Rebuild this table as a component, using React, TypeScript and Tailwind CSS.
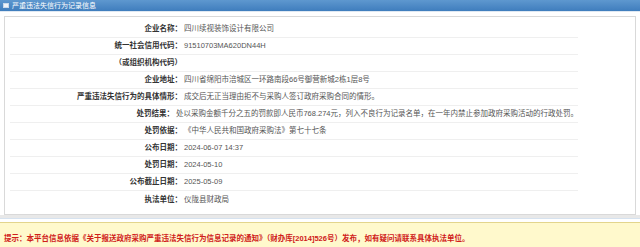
const rows: [string, string][] = [
  ["企业名称：", "四川续视装饰设计有限公司"],
  ["统一社会信用代码：", "91510703MA620DN44H"],
  ["（或组织机构代码）", ""],
  ["企业地址：", "四川省绵阳市涪城区一环路南段66号御营新城2栋1层8号"],
  ["严重违法失信行为的具体情形：", "成交后无正当理由拒不与采购人签订政府采购合同的情形。"],
  ["处罚结果：", "处以采购金额千分之五的罚款即人民币768.274元，列入不良行为记录名单，在一年内禁止参加政府采购活动的行政处罚。"],
  ["处罚依据：", "《中华人民共和国政府采购法》第七十七条"],
  ["公布日期：", "2024-06-07 14:37"],
  ["处罚日期：", "2024-05-10"],
  ["公布截止日期：", "2025-05-09"],
  ["执法单位：", "仪陇县财政局"],
];

export default function App() {
  return (
    <div
      className="w-[640px] h-[247px] overflow-hidden bg-white text-[7.5px] leading-none"
      style={{ fontFamily: '"Liberation Sans", "Noto Sans CJK SC", sans-serif' }}
    >
      <div className="h-[12px] bg-gradient-to-b from-[#5e98cf] to-[#3f7dbd] flex items-center pl-[3px] gap-[3px] border-b border-[#dfe8f2]">
        <span className="w-[6px] h-[5px] bg-white/90 border border-[#c9d9ea]" />
        <span className="text-white text-[7px]">严重违法失信行为记录信息</span>
      </div>
      <div className="h-[4px]" />
      <div className="mx-[4px] h-[199px] border border-[#d9d9d9] pt-[4px]">
        <div className="ml-[5px] w-[568px]">
          {rows.map(([label, value], i) => (
            <div
              key={i}
              className={`flex items-center h-[17px] ${i < rows.length - 1 ? "border-b border-[#efefef]" : ""}`}
            >
              <div className="w-[172px] text-right font-bold text-[#333] whitespace-nowrap">{label}</div>
              <div className="pl-[2px] text-[#555] whitespace-nowrap">{value}</div>
            </div>
          ))}
        </div>
      </div>
      <div className="h-[3px] bg-[#e8e8e8]" />
      <div className="h-[1px] bg-[#d6e2ef]" />
      <div className="h-[3px]" />
      <div className="h-[30px] bg-[#fff9cc] border-t border-[#e3d58c] flex items-center pl-[4px] pt-[2px]">
        <span className="text-[#d0201a] font-bold whitespace-nowrap">
          提示：本平台信息依据《关于报送政府采购严重违法失信行为信息记录的通知》（财办库[2014]526号）发布，如有疑问请联系具体执法单位。
        </span>
      </div>
    </div>
  );
}
